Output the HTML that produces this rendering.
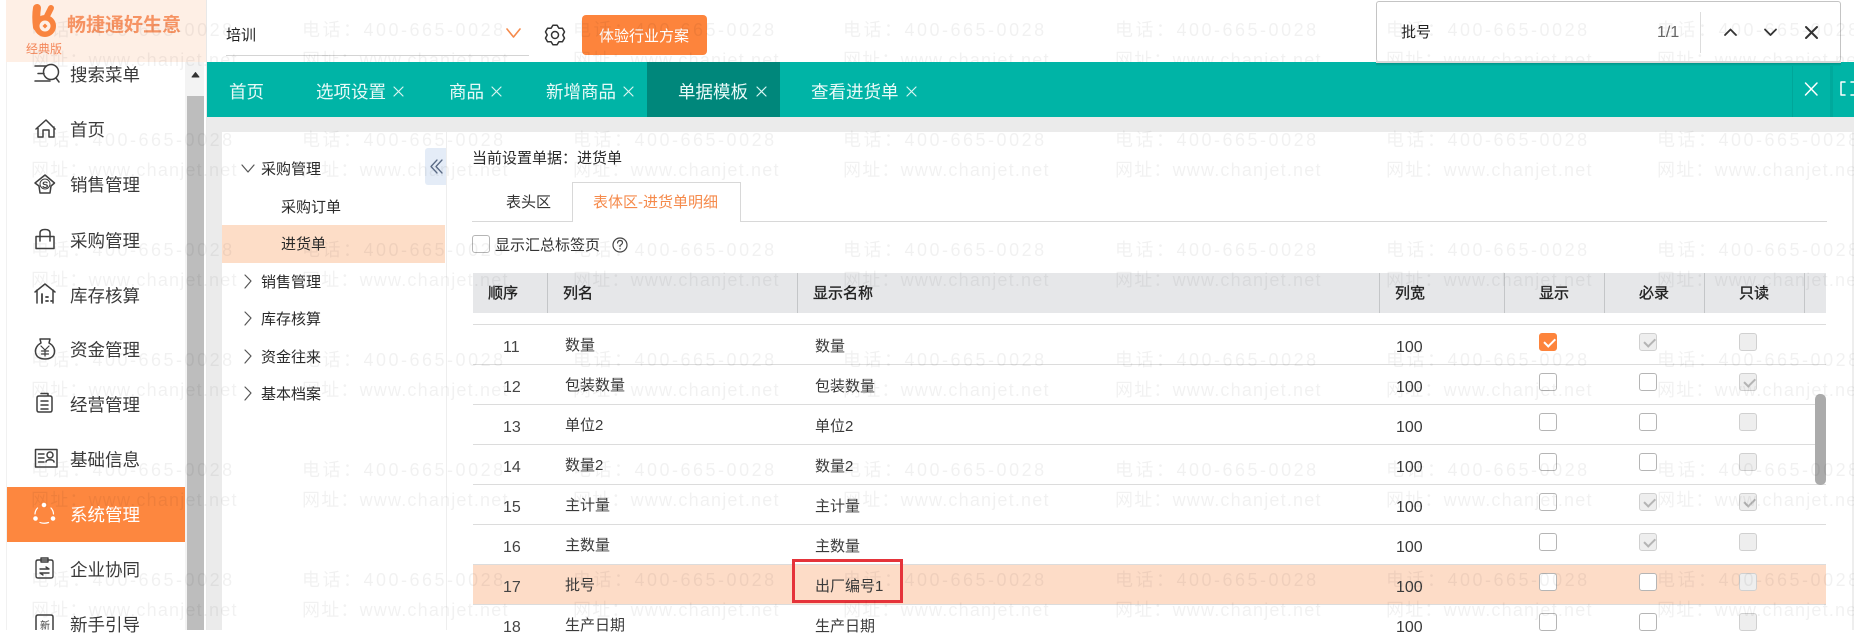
<!DOCTYPE html>
<html lang="zh"><head><meta charset="utf-8"><title>单据模板</title>
<style>
html,body{margin:0;padding:0;background:#fff}
body{width:1854px;height:630px;overflow:hidden;position:relative;font-family:"Liberation Sans","Noto Sans CJK SC",sans-serif;color:#333}
.b{position:absolute}
.t{position:absolute;white-space:nowrap;line-height:20px;font-size:15px;height:20px;margin-top:1px}
.x{margin-top:2px}
.m{font-size:17.5px;color:#3a3a3a;left:70px;line-height:24px;height:24px}
.tab{font-size:17.5px;color:#e8faf8;line-height:24px;height:24px;top:79px}
.h{top:283px;color:#222;-webkit-text-stroke:.35px #222}
.wr{position:absolute;left:0;white-space:nowrap;font-size:18px;line-height:24px;height:24px;color:rgba(0,0,0,.055);z-index:5}
.wr span{position:absolute;top:0}
.p{letter-spacing:2.5px}.u{letter-spacing:1.2px}
.cb{position:absolute;width:16px;height:16px;border:1px solid #b5b5b5;border-radius:3px;background:#fff;box-sizing:content-box}
.d{background:#eee;border-color:#d0d0d0}
.tr{background:transparent}
.o{background:#fd843c;border-color:#fd843c}
.c::after{content:"";position:absolute;left:3.5px;top:3.5px;width:9px;height:4.5px;border-left:2px solid #b4b4b4;border-bottom:2px solid #b4b4b4;transform:rotate(-45deg)}
.o.c::after{border-color:#fff}
.l{position:absolute;left:473px;width:1353px;height:1px;background:#dcdcdc}
.s{position:absolute;top:273px;width:1px;height:40px;background:#c4c6c8}
.n{color:#444;left:503px;font-size:16px}.a{left:565px;color:#3a3a3a}.e{left:815px;color:#3a3a3a}.w{left:1396px;color:#3a3a3a;font-size:16px}
</style></head><body>

<!-- sidebar -->
<div class="b" style="left:6px;top:0;width:1px;height:630px;background:#f1f1f1"></div>
<div class="b" style="left:6px;top:0;width:200px;height:62px;background:#feefe5"></div>
<div class="b" style="left:185px;top:62px;width:19px;height:568px;background:#f3f3f3"></div>
<div class="b" style="left:187px;top:96px;width:17px;height:534px;background:#bdbdbd"></div>
<div class="b" style="left:206px;top:0;width:1px;height:630px;background:#e8e8e8"></div>
<div class="b" style="left:7px;top:487px;width:178px;height:55px;background:#fd873f"></div>

<div class="t" style="left:67px;top:14px;font-size:19px;line-height:22px;height:22px;font-weight:bold;color:#f69363">畅捷通好生意</div>
<div class="t" style="left:26px;top:38px;font-size:12px;color:#f4875a">经典版</div>

<div class="t m" style="top:62px">搜索菜单</div>
<div class="t m" style="top:117px">首页</div>
<div class="t m" style="top:172px">销售管理</div>
<div class="t m" style="top:228px">采购管理</div>
<div class="t m" style="top:283px">库存核算</div>
<div class="t m" style="top:337px">资金管理</div>
<div class="t m" style="top:392px">经营管理</div>
<div class="t m" style="top:447px">基础信息</div>
<div class="t m" style="top:502px;color:#fff">系统管理</div>
<div class="t m" style="top:557px">企业协同</div>
<div class="t m" style="top:612px">新手引导</div>

<!-- top bar -->
<div class="t" style="left:226px;top:25px;color:#222">培训</div>
<div class="b" style="left:226px;top:55px;width:303px;height:1px;background:#d4d4d4"></div>
<div class="b" style="left:582px;top:15px;width:125px;height:40px;background:#fd843c;border-radius:4px"></div>
<div class="t x" style="left:599px;top:25px;color:#fff">体验行业方案</div>

<!-- search box -->
<div class="b" style="left:1376px;top:1px;width:465px;height:61px;background:#fff;border:1px solid #c4c4c4;border-bottom:0;border-radius:3px;box-sizing:border-box;z-index:1"></div>
<div class="t" style="left:1401px;top:22px;color:#222;z-index:2">批号</div>
<div class="t" style="left:1657px;top:22px;color:#666;z-index:2;font-size:16px">1/1</div>
<div class="b" style="left:1700px;top:12px;width:1px;height:41px;background:#ddd;z-index:2"></div>

<!-- teal bar -->
<div class="b" style="left:207px;top:62px;width:1647px;height:55px;background:#00b4a6;z-index:6"></div>
<div class="b" style="left:647px;top:62px;width:133px;height:55px;background:#00877b;z-index:6"></div>
<div class="b" style="left:1792px;top:62px;width:1px;height:55px;background:#00a699;z-index:6"></div>
<div class="b" style="left:1830px;top:62px;width:3px;height:55px;background:#00a99c;z-index:6"></div>
<div class="b" style="left:1376px;top:62px;width:465px;height:4px;background:linear-gradient(#00897e,#00b4a6);z-index:6"></div>
<div class="b" style="left:1376px;top:61px;width:465px;height:2px;background:#d8d8d8;z-index:6"></div>
<div style="z-index:7;position:absolute;left:0;top:0">
<div class="t tab" style="left:229px">首页</div>
<div class="t tab" style="left:316px">选项设置</div>
<div class="t tab" style="left:449px">商品</div>
<div class="t tab" style="left:546px">新增商品</div>
<div class="t tab" style="left:678px">单据模板</div>
<div class="t tab" style="left:811px">查看进货单</div>
</div>

<!-- content frame -->
<div class="b" style="left:207px;top:117px;width:1647px;height:15px;background:#ebebeb"></div>
<div class="b" style="left:207px;top:132px;width:15px;height:498px;background:#ebebeb"></div>
<div class="b" style="left:446px;top:132px;width:1px;height:498px;background:#eeeeee"></div>
<div class="b" style="left:1852px;top:132px;width:2px;height:498px;background:#eee"></div>
<div class="b" style="left:425px;top:148px;width:21px;height:37px;background:#e4ecf7;border-radius:3px 0 0 3px"></div>
<div class="b" style="left:222px;top:225px;width:223px;height:38px;background:#fdddc7"></div>

<div class="t x" style="left:261px;top:158px;color:#2a2a2a">采购管理</div>
<div class="t x" style="left:281px;top:196px;color:#2a2a2a">采购订单</div>
<div class="t x" style="left:281px;top:233px;color:#2a2a2a">进货单</div>
<div class="t x" style="left:261px;top:271px;color:#2a2a2a">销售管理</div>
<div class="t x" style="left:261px;top:308px;color:#2a2a2a">库存核算</div>
<div class="t x" style="left:261px;top:346px;color:#2a2a2a">资金往来</div>
<div class="t x" style="left:261px;top:383px;color:#2a2a2a">基本档案</div>

<div class="t x" style="left:472px;top:147px;color:#2a2a2a">当前设置单据：进货单</div>
<div class="b" style="left:472px;top:221px;width:1355px;height:1px;background:#d8d8d8"></div>
<div class="b" style="left:572px;top:182px;width:169px;height:40px;background:#fff;border:1px solid #d8d8d8;border-bottom:0;box-sizing:border-box"></div>
<div class="t x" style="left:506px;top:191px;color:#333">表头区</div>
<div class="t x" style="left:593px;top:191px;color:#f58a4b">表体区-进货单明细</div>
<div class="cb" style="left:472px;top:235px"></div>
<div class="t" style="left:495px;top:235px;color:#333">显示汇总标签页</div>

<!-- table -->
<div class="b" style="left:473px;top:273px;width:1353px;height:40px;background:#e6e7e9"></div>
<div class="s" style="left:547px"></div><div class="s" style="left:797px"></div><div class="s" style="left:1379px"></div><div class="s" style="left:1504px"></div><div class="s" style="left:1604px"></div><div class="s" style="left:1704px"></div><div class="s" style="left:1804px"></div>
<div class="t h" style="left:488px">顺序</div><div class="t h" style="left:563px">列名</div><div class="t h" style="left:813px">显示名称</div><div class="t h" style="left:1395px">列宽</div><div class="t h" style="left:1539px">显示</div><div class="t h" style="left:1639px">必录</div><div class="t h" style="left:1739px">只读</div>

<div class="b" style="left:473px;top:564px;width:1353px;height:40px;background:#fddcc7"></div>
<div class="l" style="top:324px"></div><div class="l" style="top:364px"></div><div class="l" style="top:404px"></div><div class="l" style="top:444px"></div><div class="l" style="top:484px"></div><div class="l" style="top:524px"></div><div class="l" style="top:564px"></div><div class="l" style="top:604px"></div>

<div class="t n" style="top:337px">11</div><div class="t a" style="top:335px">数量</div><div class="t e" style="top:336px">数量</div><div class="t w" style="top:337px">100</div>
<div class="t n" style="top:377px">12</div><div class="t a" style="top:375px">包装数量</div><div class="t e" style="top:376px">包装数量</div><div class="t w" style="top:377px">100</div>
<div class="t n" style="top:417px">13</div><div class="t a" style="top:415px">单位2</div><div class="t e" style="top:416px">单位2</div><div class="t w" style="top:417px">100</div>
<div class="t n" style="top:457px">14</div><div class="t a" style="top:455px">数量2</div><div class="t e" style="top:456px">数量2</div><div class="t w" style="top:457px">100</div>
<div class="t n" style="top:497px">15</div><div class="t a" style="top:495px">主计量</div><div class="t e" style="top:496px">主计量</div><div class="t w" style="top:497px">100</div>
<div class="t n" style="top:537px">16</div><div class="t a" style="top:535px">主数量</div><div class="t e" style="top:536px">主数量</div><div class="t w" style="top:537px">100</div>
<div class="t n" style="top:577px">17</div><div class="t a" style="top:575px">批号</div><div class="t e" style="top:576px">出厂编号1</div><div class="t w" style="top:577px">100</div>
<div class="t n" style="top:617px">18</div><div class="t a" style="top:615px">生产日期</div><div class="t e" style="top:616px">生产日期</div><div class="t w" style="top:617px">100</div>

<div class="cb o c" style="left:1539px;top:333px"></div><div class="cb d c" style="left:1639px;top:333px"></div><div class="cb d" style="left:1739px;top:333px"></div>
<div class="cb tr" style="left:1539px;top:373px"></div><div class="cb tr" style="left:1639px;top:373px"></div><div class="cb d c" style="left:1739px;top:373px"></div>
<div class="cb tr" style="left:1539px;top:413px"></div><div class="cb tr" style="left:1639px;top:413px"></div><div class="cb d" style="left:1739px;top:413px"></div>
<div class="cb tr" style="left:1539px;top:453px"></div><div class="cb tr" style="left:1639px;top:453px"></div><div class="cb d" style="left:1739px;top:453px"></div>
<div class="cb tr" style="left:1539px;top:493px"></div><div class="cb d c" style="left:1639px;top:493px"></div><div class="cb d c" style="left:1739px;top:493px"></div>
<div class="cb tr" style="left:1539px;top:533px"></div><div class="cb d c" style="left:1639px;top:533px"></div><div class="cb d" style="left:1739px;top:533px"></div>
<div class="cb" style="left:1539px;top:573px"></div><div class="cb" style="left:1639px;top:573px"></div><div class="cb d" style="left:1739px;top:573px"></div>
<div class="cb tr" style="left:1539px;top:613px"></div><div class="cb tr" style="left:1639px;top:613px"></div><div class="cb d" style="left:1739px;top:613px"></div>

<div class="b" style="left:1815px;top:394px;width:11px;height:91px;background:#ababab;border-radius:5px"></div>
<div class="b" style="left:792px;top:559px;width:111px;height:44px;border:3px solid #e5333a;box-sizing:border-box;z-index:4"></div>

<!-- watermark rows -->
<div class="wr" style="top:18px"><span class="p" style="left:31px">电话：400-665-0028</span><span class="p" style="left:302px">电话：400-665-0028</span><span class="p" style="left:573px">电话：400-665-0028</span><span class="p" style="left:843px">电话：400-665-0028</span><span class="p" style="left:1115px">电话：400-665-0028</span><span class="p" style="left:1386px">电话：400-665-0028</span><span class="p" style="left:1657px">电话：400-665-0028</span></div>
<div class="wr" style="top:48px"><span class="u" style="left:31px">网址：www.chanjet.net</span><span class="u" style="left:302px">网址：www.chanjet.net</span><span class="u" style="left:573px">网址：www.chanjet.net</span><span class="u" style="left:843px">网址：www.chanjet.net</span><span class="u" style="left:1115px">网址：www.chanjet.net</span><span class="u" style="left:1386px">网址：www.chanjet.net</span><span class="u" style="left:1657px">网址：www.chanjet.net</span></div>
<div class="wr" style="top:128px"><span class="p" style="left:31px">电话：400-665-0028</span><span class="p" style="left:302px">电话：400-665-0028</span><span class="p" style="left:573px">电话：400-665-0028</span><span class="p" style="left:843px">电话：400-665-0028</span><span class="p" style="left:1115px">电话：400-665-0028</span><span class="p" style="left:1386px">电话：400-665-0028</span><span class="p" style="left:1657px">电话：400-665-0028</span></div>
<div class="wr" style="top:158px"><span class="u" style="left:31px">网址：www.chanjet.net</span><span class="u" style="left:302px">网址：www.chanjet.net</span><span class="u" style="left:573px">网址：www.chanjet.net</span><span class="u" style="left:843px">网址：www.chanjet.net</span><span class="u" style="left:1115px">网址：www.chanjet.net</span><span class="u" style="left:1386px">网址：www.chanjet.net</span><span class="u" style="left:1657px">网址：www.chanjet.net</span></div>
<div class="wr" style="top:238px"><span class="p" style="left:31px">电话：400-665-0028</span><span class="p" style="left:302px">电话：400-665-0028</span><span class="p" style="left:573px">电话：400-665-0028</span><span class="p" style="left:843px">电话：400-665-0028</span><span class="p" style="left:1115px">电话：400-665-0028</span><span class="p" style="left:1386px">电话：400-665-0028</span><span class="p" style="left:1657px">电话：400-665-0028</span></div>
<div class="wr" style="top:268px"><span class="u" style="left:31px">网址：www.chanjet.net</span><span class="u" style="left:302px">网址：www.chanjet.net</span><span class="u" style="left:573px">网址：www.chanjet.net</span><span class="u" style="left:843px">网址：www.chanjet.net</span><span class="u" style="left:1115px">网址：www.chanjet.net</span><span class="u" style="left:1386px">网址：www.chanjet.net</span><span class="u" style="left:1657px">网址：www.chanjet.net</span></div>
<div class="wr" style="top:348px"><span class="p" style="left:31px">电话：400-665-0028</span><span class="p" style="left:302px">电话：400-665-0028</span><span class="p" style="left:573px">电话：400-665-0028</span><span class="p" style="left:843px">电话：400-665-0028</span><span class="p" style="left:1115px">电话：400-665-0028</span><span class="p" style="left:1386px">电话：400-665-0028</span><span class="p" style="left:1657px">电话：400-665-0028</span></div>
<div class="wr" style="top:378px"><span class="u" style="left:31px">网址：www.chanjet.net</span><span class="u" style="left:302px">网址：www.chanjet.net</span><span class="u" style="left:573px">网址：www.chanjet.net</span><span class="u" style="left:843px">网址：www.chanjet.net</span><span class="u" style="left:1115px">网址：www.chanjet.net</span><span class="u" style="left:1386px">网址：www.chanjet.net</span><span class="u" style="left:1657px">网址：www.chanjet.net</span></div>
<div class="wr" style="top:458px"><span class="p" style="left:31px">电话：400-665-0028</span><span class="p" style="left:302px">电话：400-665-0028</span><span class="p" style="left:573px">电话：400-665-0028</span><span class="p" style="left:843px">电话：400-665-0028</span><span class="p" style="left:1115px">电话：400-665-0028</span><span class="p" style="left:1386px">电话：400-665-0028</span><span class="p" style="left:1657px">电话：400-665-0028</span></div>
<div class="wr" style="top:488px"><span class="u" style="left:31px">网址：www.chanjet.net</span><span class="u" style="left:302px">网址：www.chanjet.net</span><span class="u" style="left:573px">网址：www.chanjet.net</span><span class="u" style="left:843px">网址：www.chanjet.net</span><span class="u" style="left:1115px">网址：www.chanjet.net</span><span class="u" style="left:1386px">网址：www.chanjet.net</span><span class="u" style="left:1657px">网址：www.chanjet.net</span></div>
<div class="wr" style="top:568px"><span class="p" style="left:31px">电话：400-665-0028</span><span class="p" style="left:302px">电话：400-665-0028</span><span class="p" style="left:573px">电话：400-665-0028</span><span class="p" style="left:843px">电话：400-665-0028</span><span class="p" style="left:1115px">电话：400-665-0028</span><span class="p" style="left:1386px">电话：400-665-0028</span><span class="p" style="left:1657px">电话：400-665-0028</span></div>
<div class="wr" style="top:598px"><span class="u" style="left:31px">网址：www.chanjet.net</span><span class="u" style="left:302px">网址：www.chanjet.net</span><span class="u" style="left:573px">网址：www.chanjet.net</span><span class="u" style="left:843px">网址：www.chanjet.net</span><span class="u" style="left:1115px">网址：www.chanjet.net</span><span class="u" style="left:1386px">网址：www.chanjet.net</span><span class="u" style="left:1657px">网址：www.chanjet.net</span></div>

<!-- icons -->
<svg class="b" style="left:0;top:0;z-index:8" width="1854" height="630" viewBox="0 0 1854 630" fill="none" stroke-linecap="round" stroke-linejoin="round">
<!-- logo -->
<circle cx="45" cy="26" r="11" fill="#f9843f"/>
<path d="M37 8C36 14 36 20 37 27" stroke="#f9843f" stroke-width="8"/>
<path d="M51 8L47 16" stroke="#f9843f" stroke-width="6"/>
<circle cx="45" cy="26" r="5.500" fill="#feefe5"/><path d="M45 23.500L47.500 26L45 28.500L42.500 26Z" fill="#f9843f"/>
<path d="M192 77L199 77L195.500 72.500Z" fill="#333" stroke="#333"/>
<!-- sidebar icons -->
<g stroke="#3f3f3f" stroke-width="1.500">
<path d="M35 66H46M38 73.500H44M35 81H50"/><circle cx="51" cy="72" r="7.500"/><path d="M56 78L59 82"/>
<path d="M36 129L46 120L55 129M38 127V137H43V130H49V137H54V127"/>
<path d="M35 183L45 175L54.500 183L51 186L50 193H40L39 186Z"/>
<circle cx="45" cy="184" r="5" stroke-width="1"/>
<path d="M36 236.500H54V248.500H36ZM40 241V233Q40 229.500 45 229.500Q50 229.500 50 233V241"/>
<path d="M35 292L45 284L55 292M37 290V303M53 290V303"/><path d="M42 294V303M46 297H48M46 301H48M51 301H52" stroke-width="1.800"/>
<path d="M40 339H50L49 343C53 345 55 349 54.500 352C54 357 50 359 45 359C40 359 36 357 35.500 352C35 349 37 345 41 343Z"/>
<path d="M41 346L45 350L49 346M45 350V356M41.500 351H48.500M41.500 354H48.500" stroke-width="1.200"/>
<path d="M39 396H50Q52 396 52 398V410Q52 412 50 412H39Q37 412 37 410V398Q37 396 39 396ZM41 393.500H48V396M41 401H48M41 405H48M41 409H48"/>
<path d="M35.500 449.500H57V467H35.500ZM38.500 454H44M38.500 458H44M38.500 462H44"/><circle cx="50" cy="455" r="3"/><path d="M46 462C46 459 54 459 54 462"/>
<path d="M38 560H51Q53 560 53 562V576Q53 578 51 578H38Q36 578 36 576V562Q36 560 38 560ZM41 558H48V562H41ZM40 569H49L46 567M49 573H40L43 575" stroke-width="1.400"/>
<path d="M38 615H51Q53 615 53 617V630M36 630V617Q36 615 38 615"/>
</g>
<g stroke="#fff" stroke-width="1.200" fill="#fff">
<path d="M37.500 508A9.500 9.500 0 0 0 35 514M51 508A9.500 9.500 0 0 1 53.500 514M40 522.500Q44 524 48.500 522.500" fill="none"/>
<circle cx="44" cy="505" r="1.700"/><circle cx="35.500" cy="518.500" r="1.700"/><circle cx="53" cy="518.500" r="1.700"/>
</g>
<text x="42" y="188" font-size="9.500" font-weight="bold" fill="#3f3f3f" font-family="Liberation Sans">S</text>
<text x="40" y="629" font-size="10" fill="#3f3f3f" font-family="Noto Sans CJK SC">新</text>
<!-- top bar icons -->
<path d="M507 29L513.500 37L520 29" stroke="#f58a4b" stroke-width="1.600"/>
<g stroke="#333" stroke-width="1.500">
<path d="M552.920 25.220L557.080 25.220L558.900 28.250L562.430 28.310L564.510 31.910L562.800 35L564.510 38.090L562.430 41.690L558.900 41.750L557.080 44.780L552.920 44.780L551.100 41.750L547.570 41.690L545.490 38.090L547.200 35L545.490 31.910L547.570 28.310L551.100 28.250Z"/><circle cx="555" cy="35" r="3.500"/>
</g>
<!-- search box icons -->
<path d="M1725 35L1730.500 29.500L1736 35M1765 29.500L1770.500 35L1776 29.500" stroke="#333" stroke-width="1.800"/>
<path d="M1806 27L1817 38M1817 27L1806 38" stroke="#333" stroke-width="2"/>
<!-- tab closes -->
<g stroke="#d9f5f2" stroke-width="1.200">
<path d="M394 87L403 96M403 87L394 96"/>
<path d="M492 87L501 96M501 87L492 96"/>
<path d="M624 87L633 96M633 87L624 96"/>
<path d="M757 87L766 96M766 87L757 96"/>
<path d="M907 87L916 96M916 87L907 96"/>
</g>
<path d="M1805.500 83L1817 95M1817 83L1805.500 95" stroke="#fff" stroke-width="1.500"/>
<path d="M1845 82H1841V95H1845M1851 82H1854M1851 95H1854" stroke="#fff" stroke-width="1.500"/>
<!-- tree -->
<path d="M437 160L431 166.500L437 173M442 160L436 166.500L442 173" stroke="#5a6a85" stroke-width="1.300"/>
<g stroke="#555" stroke-width="1.200">
<path d="M242 165L248 172L254 165"/>
<path d="M245 275L251 281L245 288"/>
<path d="M245 312L251 318L245 325"/>
<path d="M245 350L251 356L245 363"/>
<path d="M245 387L251 393L245 400"/>
</g>
<!-- help -->
<circle cx="620" cy="245" r="7" stroke="#444" stroke-width="1.200"/>
<path d="M617.500 243Q618 240.500 620 240.500Q622.500 240.500 622.500 242.500Q622.500 244 620 245.500V246.500M620 248.500V249" stroke="#444" stroke-width="1.200"/>
</svg>
</body></html>
